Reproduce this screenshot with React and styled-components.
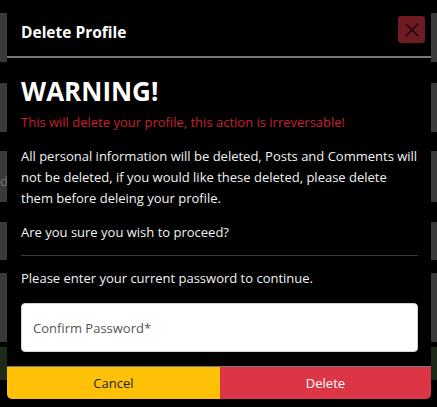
import React from 'react';
import styled, { createGlobalStyle } from 'styled-components';

const GlobalStyle = createGlobalStyle`
    html, body {
    margin: 0;
    padding: 0;
    background: #000;
    font-family: "Open Sans", "Noto Sans", sans-serif;
    }
`;

const Page = styled.div`
    position: relative;
    width: 437px;
    height: 407px;
    overflow: hidden;
    background: #000;
`;

const BackList = styled.div`
    display: flex;
    flex-direction: column;
    padding-top: 13px;
`;

const BackCard = styled.div`
    height: ${props => props.h}px;
    margin-bottom: ${props => props.gap}px;
    background: ${props => props.green ? '#1d2a18' : '#3a3a3a'};
    color: #777;
    font-size: 13px;
    display: flex;
    align-items: flex-end;
    padding-bottom: ${props => props.text ? 12 : 0}px;
    box-sizing: border-box;
`;

const Modal = styled.div`
    position: absolute;
    top: 0;
    left: 7px;
    width: 424px;
    background: #000;
    color: #fff;
    border-radius: 0 0 5px 5px;
`;

const Header = styled.div`
    display: flex;
    align-items: center;
    justify-content: space-between;
    height: 58px;
    padding: 0 6px 0 14px;
    border-bottom: 2px solid #777;
    box-sizing: border-box;
`;

const Title = styled.h5`
    margin: 7px 0 0;
    font-size: 15.5px;
    font-weight: 700;
`;

const CloseButton = styled.button`
    width: 27px;
    height: 27px;
    margin-top: 3px;
    padding: 0;
    border: none;
    border-radius: 3px;
    background: #6e1b24;
    display: flex;
    align-items: center;
    justify-content: center;
`;

const Body = styled.div`
    padding: 15px 13px 0 14px;
`;

const Warning = styled.h2`
    margin: 0;
    font-size: 26px;
    font-weight: 700;
    line-height: 36px;
`;

const Text = styled.p`
    margin: ${props => props.mt || 0}px 0 0;
    font-size: 13px;
    line-height: 21px;
    color: ${props => props.red ? '#c8212f' : '#f2f2f2'};
`;

const Divider = styled.hr`
    margin: 12px 0 12px;
    border: none;
    border-top: 1px solid #3a3a3a;
`;

const PasswordInput = styled.input`
    display: block;
    width: 100%;
    height: 49px;
    margin-top: 14px;
    box-sizing: border-box;
    padding: 0 11px;
    border: 1px solid #ced4da;
    border-radius: 4px;
    background: #fff;
    font-family: inherit;
    font-size: 13px;
    color: #333;

    &::placeholder {
    color: #555;
    }

    &:focus {
    outline: 0;
    }
`;

const Footer = styled.div`
    display: flex;
    margin-top: 14px;
    border-top: 1px solid #777;
`;

const FooterButton = styled.button`
    flex: ${props => props.flex};
    height: 32px;
    border: none;
    font-family: inherit;
    font-size: 13px;
    background: ${props => props.red ? '#dc3545' : '#ffc107'};
    color: ${props => props.red ? '#fff' : '#222'};
    border-radius: ${props => props.red ? '0 0 5px 0' : '0 0 0 5px'};
`;

const backCards = [
    { h: 49, gap: 21 },
    { h: 49, gap: 19 },
    { h: 51, gap: 20, text: 'dr' },
    { h: 38, gap: 13 },
    { h: 69, gap: 5 },
    { h: 33, gap: 0, green: true },
];

const App = () => {
    return (
        <>
            <GlobalStyle />
            <Page>
                <BackList>
                    {backCards.map((c, i) => (
                        <BackCard key={i} h={c.h} gap={c.gap} green={c.green} text={c.text}>
                            {c.text}
                        </BackCard>
                    ))}
                </BackList>

                <Modal>
                    <Header>
                        <Title>Delete Profile</Title>
                        <CloseButton aria-label="Close">
                            <svg width="14" height="14" viewBox="0 0 14 14">
                                <path d="M1 1L13 13M13 1L1 13" stroke="#1a0508" strokeWidth="1.5" />
                            </svg>
                        </CloseButton>
                    </Header>

                    <Body>
                        <Warning>WARNING!</Warning>
                        <Text red mt={3}>This will delete your profile, this action is irreversable!</Text>
                        <Text mt={13}>
                            All personal information will be deleted, Posts and Comments will not be deleted, if you would like these deleted, please delete them before deleing your profile.
                        </Text>
                        <Text mt={13}>Are you sure you wish to proceed?</Text>
                        <Divider />
                        <Text>Please enter your current password to continue.</Text>
                        <PasswordInput type="password" placeholder="Confirm Password*" />
                    </Body>

                    <Footer>
                        <FooterButton flex={213}>Cancel</FooterButton>
                        <FooterButton red flex={211}>Delete</FooterButton>
                    </Footer>
                </Modal>
            </Page>
        </>
    );
};

export default App;
